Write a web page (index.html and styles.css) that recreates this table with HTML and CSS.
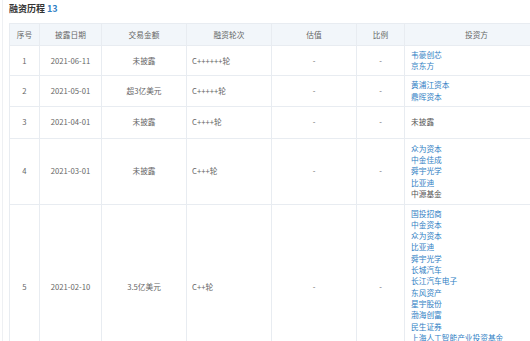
FILE: index.html
```html
<!DOCTYPE html>
<html lang="zh-CN">
<head>
  <meta charset="UTF-8">
  <meta name="viewport" content="width=device-width, initial-scale=1.0">
  <title>融资历程</title>
  <link rel="stylesheet" href="styles.css">
</head>
<body>
  <div class="panel">
    <h2 class="title">融资历程 <span class="count">13</span></h2>

    <table class="rounds">
      <colgroup>
        <col class="c-no">
        <col class="c-date">
        <col class="c-amount">
        <col class="c-round">
        <col class="c-value">
        <col class="c-ratio">
        <col class="c-investor">
      </colgroup>
      <thead>
        <tr>
          <th>序号</th>
          <th>披露日期</th>
          <th>交易金额</th>
          <th>融资轮次</th>
          <th>估值</th>
          <th>比例</th>
          <th>投资方</th>
        </tr>
      </thead>
      <tbody>
        <tr class="row-1">
          <td>1</td>
          <td>2021-06-11</td>
          <td>未披露</td>
          <td class="left">C++++++轮</td>
          <td>-</td>
          <td>-</td>
          <td class="investors">
            <a href="#">韦豪创芯</a>
            <a href="#">京东方</a>
          </td>
        </tr>
        <tr class="row-2">
          <td>2</td>
          <td>2021-05-01</td>
          <td>超3亿美元</td>
          <td class="left">C+++++轮</td>
          <td>-</td>
          <td>-</td>
          <td class="investors">
            <a href="#">黄浦江资本</a>
            <a href="#">鼎晖资本</a>
          </td>
        </tr>
        <tr class="row-3">
          <td>3</td>
          <td>2021-04-01</td>
          <td>未披露</td>
          <td class="left">C++++轮</td>
          <td>-</td>
          <td>-</td>
          <td class="investors">
            <span>未披露</span>
          </td>
        </tr>
        <tr class="row-4">
          <td>4</td>
          <td>2021-03-01</td>
          <td>未披露</td>
          <td class="left">C+++轮</td>
          <td>-</td>
          <td>-</td>
          <td class="investors">
            <a href="#">众为资本</a>
            <a href="#">中金佳成</a>
            <a href="#">舜宇光学</a>
            <a href="#">比亚迪</a>
            <span>中源基金</span>
          </td>
        </tr>
        <tr>
          <td>5</td>
          <td>2021-02-10</td>
          <td>3.5亿美元</td>
          <td class="left">C++轮</td>
          <td>-</td>
          <td>-</td>
          <td class="investors">
            <a href="#">国投招商</a>
            <a href="#">中金资本</a>
            <a href="#">众为资本</a>
            <a href="#">比亚迪</a>
            <a href="#">舜宇光学</a>
            <a href="#">长城汽车</a>
            <a href="#">长江汽车电子</a>
            <a href="#">东风资产</a>
            <a href="#">星宇股份</a>
            <a href="#">渤海创富</a>
            <a href="#">民生证券</a>
            <a href="#">上海人工智能产业投资基金</a>
            <a href="#">中信证券</a>
            <a href="#">宁德时代</a>
          </td>
        </tr>
      </tbody>
    </table>
  </div>
</body>
</html>
```

FILE: styles.css
```css
body {
  margin: 0;
  overflow: hidden;
  background-color: #fff;
  color: #666;
  font-family: "Noto Sans CJK SC", "Noto Sans", sans-serif;
}
.panel {
  margin-left: 2px;
  padding: 2px 0 0 6px;
  border-left: 1px solid #eef0f3;
  min-height: 400px;
}
.title {
  margin: 0 0 7px 0;
  font-size: 9px;
  line-height: 14px;
  font-weight: bold;
  color: #333;
}
.count {
  color: #2f80c4;
}
.rounds {
  border-collapse: collapse;
  table-layout: fixed;
  width: 540px;
  font-size: 7.7px;
}
.c-no { width: 30px; }
.c-date { width: 62px; }
.c-amount { width: 85px; }
.c-round { width: 85px; }
.c-value { width: 85px; }
.c-ratio { width: 48px; }
.rounds th,
.rounds td {
  border: 1px solid #e8ecf1;
  padding: 3px 5px;
  text-align: center;
  vertical-align: middle;
  line-height: 11.3px;
  font-weight: normal;
}
.rounds th {
  height: 15px;
  background-color: #f2f6fa;
  color: #666;
}
.rounds td.left,
.rounds td.investors {
  text-align: left;
}
.rounds td.investors {
  padding-left: 6px;
}
.investors a,
.investors span {
  display: block;
  text-decoration: none;
}
.investors a {
  color: #2f80c4;
}
.investors span {
  color: #555;
}
.row-1 td { height: 22px; }
.row-2 td { height: 24px; }
.row-3 td { height: 25px; }
.row-4 td { height: 59px; }
```
